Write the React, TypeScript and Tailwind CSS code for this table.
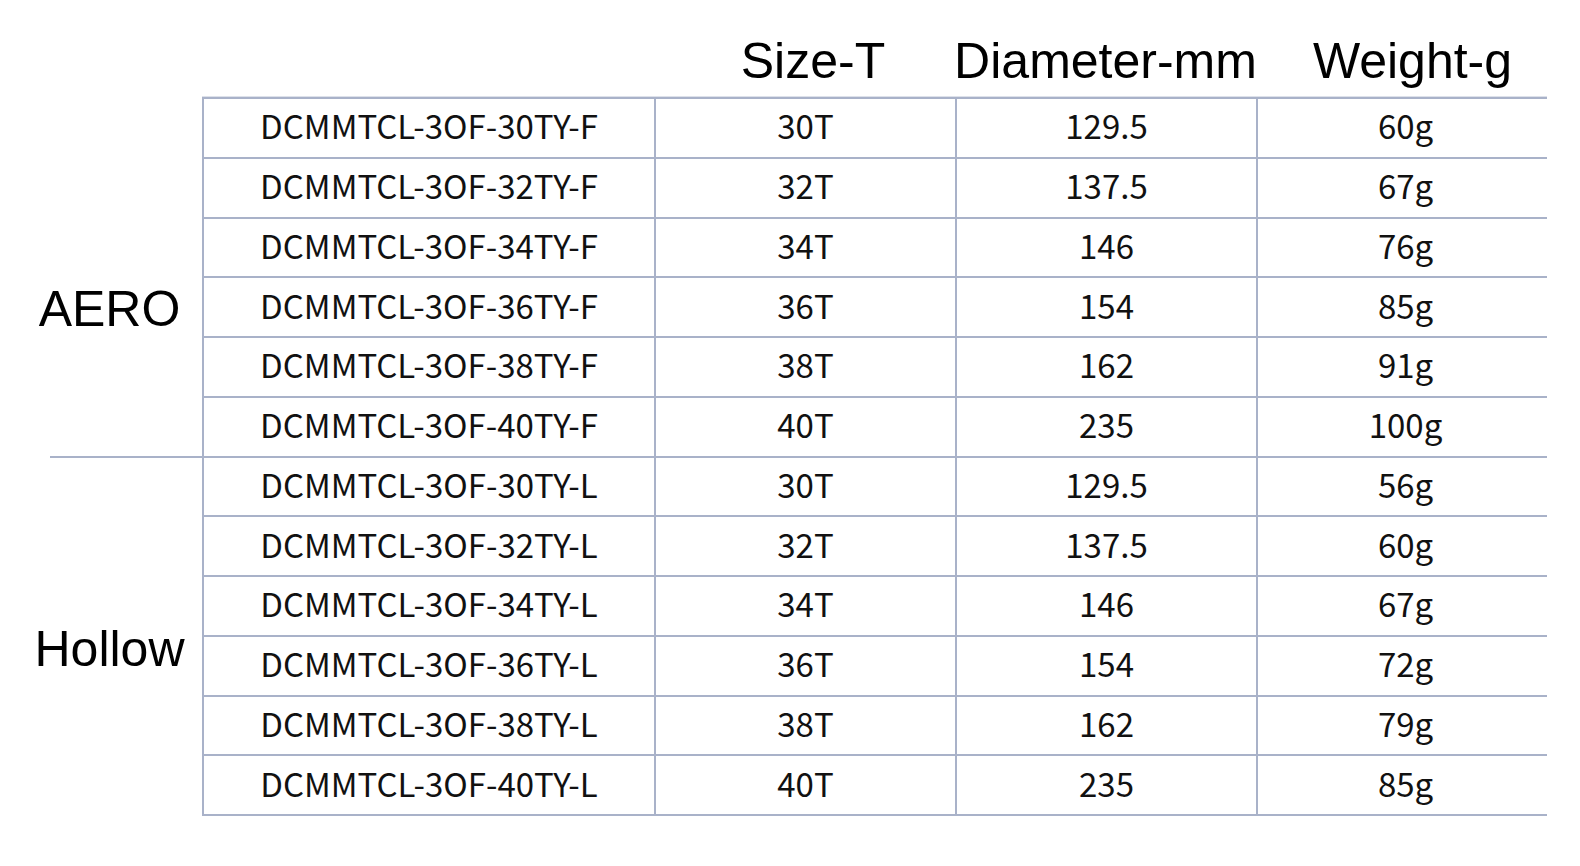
import React from 'react'

const aero = [
  ['DCMMTCL-3OF-30TY-F', '30T', '129.5', '60g'],
  ['DCMMTCL-3OF-32TY-F', '32T', '137.5', '67g'],
  ['DCMMTCL-3OF-34TY-F', '34T', '146', '76g'],
  ['DCMMTCL-3OF-36TY-F', '36T', '154', '85g'],
  ['DCMMTCL-3OF-38TY-F', '38T', '162', '91g'],
  ['DCMMTCL-3OF-40TY-F', '40T', '235', '100g'],
]

const hollow = [
  ['DCMMTCL-3OF-30TY-L', '30T', '129.5', '56g'],
  ['DCMMTCL-3OF-32TY-L', '32T', '137.5', '60g'],
  ['DCMMTCL-3OF-34TY-L', '34T', '146', '67g'],
  ['DCMMTCL-3OF-36TY-L', '36T', '154', '72g'],
  ['DCMMTCL-3OF-38TY-L', '38T', '162', '79g'],
  ['DCMMTCL-3OF-40TY-L', '40T', '235', '85g'],
]

function Row({ cells }: { cells: string[] }) {
  return (
    <div className="grid grid-cols-[452px_301px_301px_291px] h-[59.75px] border-b-2 border-[#a9b2c9]">
      {cells.map((c, i) => (
        <div
          key={i}
          className={
            'border-l-2 border-[#a9b2c9] flex items-center justify-center pb-1 text-[33px] leading-none text-[#111]' +
            (i === 3 ? ' pl-[6px]' : '')
          }
        >
          {c}
        </div>
      ))}
    </div>
  )
}

export default function App() {
  return (
    <div className="w-[1580px] h-[866px] bg-white flex flex-col font-['Liberation_Sans',Arial,sans-serif] text-black">
      {/* header */}
      <div className="grid grid-cols-[654px_301px_301px_291px] h-[97px] pt-[35.5px] text-[50px] leading-none whitespace-nowrap">
        <div />
        <div className="flex justify-center pl-[17px]">Size-T</div>
        <div className="flex justify-center">Diameter-mm</div>
        <div className="flex justify-center pl-[22px]">Weight-g</div>
      </div>

      <div className="flex">
        {/* group labels */}
        <div className="w-[202px] flex flex-col text-[50px] leading-none">
          <div className="h-[358.5px] pt-[187px] pl-[17px] text-center">AERO</div>
          <div className="ml-[50px] h-[2px] bg-[#a9b2c9]" />
          <div className="pt-[166.5px] pl-[17px] text-center">Hollow</div>
        </div>

        {/* table */}
        <div className="w-[1345px] border-t-2 border-[#a9b2c9] shadow-[0_-1px_0_#dde1ea] font-['Noto_Sans_CJK_SC','Noto_Sans',sans-serif]">
          {aero.map((r) => (
            <Row key={r[0]} cells={r} />
          ))}
          {hollow.map((r) => (
            <Row key={r[0]} cells={r} />
          ))}
        </div>
      </div>
    </div>
  )
}
